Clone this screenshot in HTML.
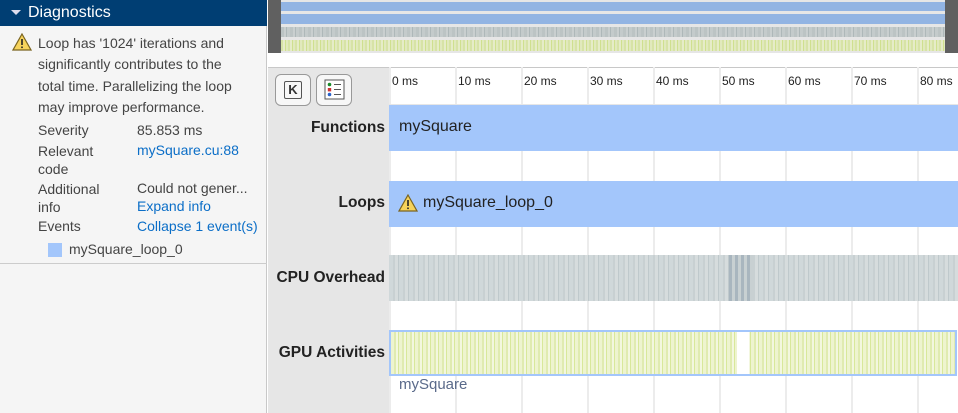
<!DOCTYPE html>
<html><head><style>
*{margin:0;padding:0;box-sizing:border-box}
body{width:958px;height:413px;overflow:hidden;font-family:"Liberation Sans",sans-serif;background:#fff;position:relative}
.abs{position:absolute}
#left{left:0;top:0;width:267px;height:413px;background:#f5f5f5;border-right:1px solid #c8c8c8}
#hdr{left:0;top:0;width:267px;height:26px;background:#003e73;color:#fff;font-size:16px;line-height:26px;padding-left:28px}
.t{font-size:14px;color:#444;position:absolute;white-space:nowrap}
.l{color:#0b6ec7}
.lbl{font-weight:bold;font-size:15.5px;color:#222;position:absolute;right:0;width:121px;text-align:right;padding-right:4px;white-space:nowrap}
.tick{font-size:12px;color:#222;position:absolute;top:74px}
.grid{position:absolute;top:67px;width:2px;height:346px;background:#ececec}
</style></head><body>
<div id="left" class="abs">
 <div id="hdr" class="abs">Diagnostics</div>
 <div class="abs" style="left:11px;top:10px;width:0;height:0;border-left:5px solid transparent;border-right:5px solid transparent;border-top:5px solid #dde"></div>
 <svg class="abs" style="left:12px;top:33px" width="20" height="18"><path d="M10 1 L19 17 L1 17 Z" fill="#f6d35c" stroke="#7a6420" stroke-width="1.2"/><rect x="9.2" y="6" width="1.6" height="6" fill="#222"/><rect x="9.2" y="13.5" width="1.6" height="1.6" fill="#222"/></svg>
 <div class="t" style="left:38px;top:33px;line-height:21.3px;width:200px;white-space:normal">Loop has '1024' iterations and significantly contributes to the total time. Parallelizing the loop may improve performance.</div>
 <div class="t" style="left:38px;top:122px">Severity</div><div class="t" style="left:137px;top:122px">85.853 ms</div>
 <div class="t" style="left:38px;top:142px;line-height:18px">Relevant<br>code</div><div class="t l" style="left:137px;top:142px">mySquare.cu:88</div>
 <div class="t" style="left:38px;top:180px;line-height:18px">Additional<br>info</div><div class="t" style="left:137px;top:180px">Could not gener...</div><div class="t l" style="left:137px;top:198px">Expand info</div>
 <div class="t" style="left:38px;top:218px">Events</div><div class="t l" style="left:137px;top:218px">Collapse 1 event(s)</div>
 <div class="abs" style="left:48px;top:243px;width:14px;height:14px;background:#a3c6fb"></div>
 <div class="t" style="left:69px;top:241px">mySquare_loop_0</div>
 <div class="abs" style="left:0;top:263px;width:267px;height:1px;background:#ccc"></div>
</div>
<!-- overview -->
<div class="abs" style="left:268px;top:0;width:690px;height:53px;background:#606060"></div>
<div class="abs" style="left:281px;top:0;width:664px;height:53px;background:#e6e6e6"></div>
<div class="abs" style="left:281px;top:2px;width:664px;height:9px;background:#92b4e3"></div>
<div class="abs" style="left:281px;top:14px;width:664px;height:10px;background:#92b4e3"></div>
<div class="abs" style="left:281px;top:27px;width:664px;height:10px;background:repeating-linear-gradient(90deg,#bcc4c4 0 3px,#c9cfcf 3px 5px,#aeb8b9 5px 6px,#c4cbcb 6px 9px)"></div>
<div class="abs" style="left:281px;top:40px;width:664px;height:11px;background:repeating-linear-gradient(90deg,#d7e3a6 0 2px,#e6ecc8 2px 4px,#cfe08f 4px 5px,#e1e9bd 5px 7px)"></div>
<div class="abs" style="left:268px;top:67px;width:690px;height:1px;background:#c8c8c8"></div>
<!-- label column -->
<div class="abs" style="left:268px;top:68px;width:121px;height:345px;background:#e6e6e6"></div>
<div class="abs" style="left:275px;top:74px;width:36px;height:32px;border:1px solid #999;border-radius:6px;background:#f7f7f7"></div>
<div class="abs" style="left:284px;top:81px;width:18px;height:18px;border:1.5px solid #555;border-radius:2px;font-size:13px;font-weight:bold;text-align:center;line-height:15px;color:#333">K</div>
<div class="abs" style="left:316px;top:74px;width:36px;height:32px;border:1px solid #999;border-radius:6px;background:#f7f7f7"></div>
<svg class="abs" style="left:324px;top:79px" width="22" height="22"><rect x="1" y="1" width="19" height="19" fill="#fff" stroke="#555"/><circle cx="5.5" cy="5.5" r="1.8" fill="#1a8a2a"/><rect x="3.8" y="9" width="3.4" height="3.4" fill="#c33"/><circle cx="5.5" cy="15.5" r="1.8" fill="#2a62c9"/><path d="M10 5.5h7M10 10.5h7M10 15.5h7" stroke="#555"/></svg>
<div class="lbl" style="left:268px;top:119px">Functions</div>
<div class="lbl" style="left:268px;top:194px">Loops</div>
<div class="lbl" style="left:268px;top:269px">CPU Overhead</div>
<div class="lbl" style="left:268px;top:344px">GPU Activities</div>
<!-- grid -->
<div class="grid" style="left:389px"></div><div class="grid" style="left:455px"></div><div class="grid" style="left:521px"></div><div class="grid" style="left:587px"></div><div class="grid" style="left:653px"></div><div class="grid" style="left:719px"></div><div class="grid" style="left:785px"></div><div class="grid" style="left:851px"></div><div class="grid" style="left:917px"></div>
<div class="abs" style="left:389px;top:104px;width:569px;height:1px;background:#e6e6e6"></div>
<div class="tick" style="left:392px">0 ms</div><div class="tick" style="left:458px">10 ms</div><div class="tick" style="left:524px">20 ms</div><div class="tick" style="left:590px">30 ms</div><div class="tick" style="left:656px">40 ms</div><div class="tick" style="left:722px">50 ms</div><div class="tick" style="left:788px">60 ms</div><div class="tick" style="left:854px">70 ms</div><div class="tick" style="left:920px">80 ms</div>
<!-- bars -->
<div class="abs" style="left:389px;top:105px;width:569px;height:46px;background:#a3c6fb"></div>
<div class="abs" style="left:399px;top:118px;font-size:16px;color:#222">mySquare</div>
<div class="abs" style="left:389px;top:181px;width:569px;height:46px;background:#a3c6fb"></div>
<svg class="abs" style="left:398px;top:194px" width="20" height="18"><path d="M10 1 L19 17 L1 17 Z" fill="#f6d35c" stroke="#7a6420" stroke-width="1.2"/><rect x="9.2" y="6" width="1.6" height="6" fill="#222"/><rect x="9.2" y="13.5" width="1.6" height="1.6" fill="#222"/></svg>
<div class="abs" style="left:423px;top:194px;font-size:16px;color:#222">mySquare_loop_0</div>
<div class="abs" style="left:389px;top:255px;width:569px;height:46px;background:repeating-linear-gradient(90deg,#d0d8da 0 4px,#c8d0d2 4px 6px,#d6dcdd 6px 9px,#bfc9cc 9px 10px)"></div>
<div class="abs" style="left:729px;top:255px;width:24px;height:46px;background:repeating-linear-gradient(90deg,#a9b6bf 0 3px,#c8d0d2 3px 6px)"></div>
<div class="abs" style="left:389px;top:330px;width:568px;height:46px;border:2px solid #a3c6fb;background:repeating-linear-gradient(90deg,#eef4cf 0 3px,#e0ebb0 3px 5px,#f3f7df 5px 7px,#d8e89a 7px 8px)"></div>
<div class="abs" style="left:737px;top:332px;width:12px;height:42px;background:#fff"></div>
<div class="abs" style="left:399px;top:376px;font-size:15px;color:#5a6a8a">mySquare</div>
</body></html>
